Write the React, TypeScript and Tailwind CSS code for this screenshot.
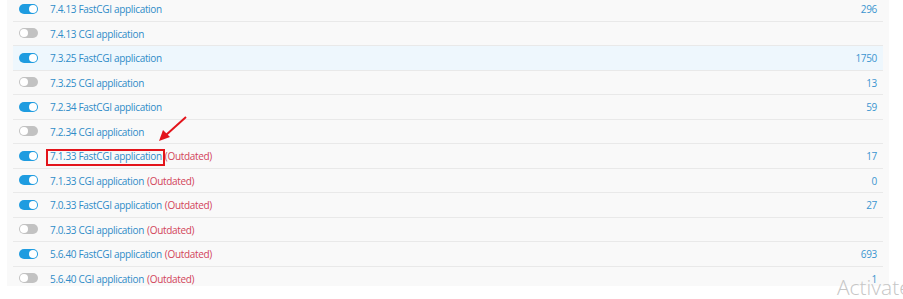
import React from 'react';

type Row = {
  label: string;
  on: boolean;
  outdated?: boolean;
  count?: string;
  highlight?: boolean;
};

const rows: Row[] = [
  { label: '7.4.13 FastCGI application', on: true, count: '296' },
  { label: '7.4.13 CGI application', on: false },
  { label: '7.3.25 FastCGI application', on: true, count: '1750', highlight: true },
  { label: '7.3.25 CGI application', on: false, count: '13' },
  { label: '7.2.34 FastCGI application', on: true, count: '59' },
  { label: '7.2.34 CGI application', on: false },
  { label: '7.1.33 FastCGI application', on: true, outdated: true, count: '17' },
  { label: '7.1.33 CGI application', on: true, outdated: true, count: '0' },
  { label: '7.0.33 FastCGI application', on: true, outdated: true, count: '27' },
  { label: '7.0.33 CGI application', on: false, outdated: true },
  { label: '5.6.40 FastCGI application', on: true, outdated: true, count: '693' },
  { label: '5.6.40 CGI application', on: false, outdated: true, count: '1' },
];

function Toggle({ on }: { on: boolean }) {
  return (
    <span
      className={`flex h-[10px] w-[19px] shrink-0 items-center rounded-full p-px ${
        on ? 'justify-end bg-[#1f9ce0]' : 'justify-start bg-[#c2c2c2]'
      }`}
    >
      <span className="h-[8px] w-[8px] rounded-full bg-white" />
    </span>
  );
}

export default function App() {
  return (
    <div
      className="relative h-[299px] w-[903px] overflow-hidden bg-white"
      style={{ fontFamily: '"Open Sans", "Liberation Sans", sans-serif' }}
    >
      {/* --- PANEL --- */}
      <div className="ml-[7px] mt-[-3px] h-[289px] w-[882px] overflow-hidden bg-[#f9f9f9] px-[6px]">
        {rows.map((r) => (
          <div
            key={r.label}
            className={`flex h-[24.5px] items-center border-b border-[#e9e9e9] pl-[6px] pr-[6px] text-[10px] tracking-[-0.32px] ${
              r.highlight ? 'bg-[#eef7fd]' : ''
            }`}
          >
            <Toggle on={r.on} />
            <span className="ml-[12px] pt-[2px] text-[#2f8cc8]">{r.label}</span>
            {r.outdated && <span className="ml-[3px] pt-[2px] text-[#d24459]">(Outdated)</span>}
            <span className="ml-auto pt-[2px] text-[#3b95d0]">{r.count}</span>
          </div>
        ))}
      </div>

      {/* --- ANNOTATIONS --- */}
      <div className="absolute left-[46px] top-[149px] h-[17px] w-[119px] border-2 border-[#e3141b]" />
      <svg className="absolute left-0 top-0" width="903" height="299">
        <line x1="186" y1="117" x2="166" y2="135" stroke="#e3141b" strokeWidth="2" />
        <polygon points="159,141 163,130 170,137" fill="#e3141b" />
      </svg>

      {/* --- WATERMARK --- */}
      <div
        className="absolute left-[837px] top-[277px] text-[21px] leading-none text-[#c6c6c6]"
        style={{ fontFamily: '"Open Sans", "DejaVu Sans", sans-serif', fontWeight: 300 }}
      >
        Activate
      </div>
    </div>
  );
}
